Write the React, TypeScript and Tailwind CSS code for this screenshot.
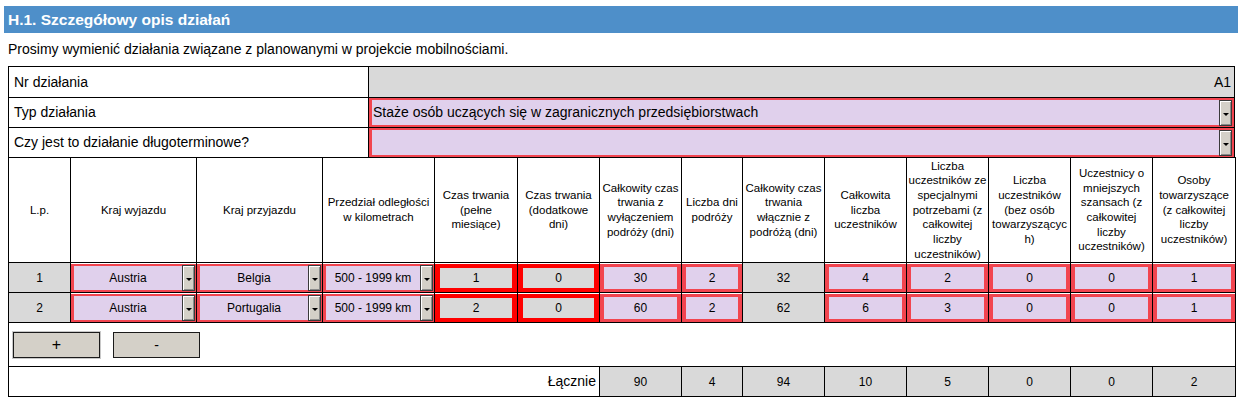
import React from 'react'

type HeadCol = { w: number; lines: string[] }

const cols: HeadCol[] = [
  { w: 62, lines: ['L.p.'] },
  { w: 126, lines: ['Kraj wyjazdu'] },
  { w: 126, lines: ['Kraj przyjazdu'] },
  { w: 112, lines: ['Przedział odległości', 'w kilometrach'] },
  { w: 83, lines: ['Czas trwania', '(pełne', 'miesiące)'] },
  { w: 82, lines: ['Czas trwania', '(dodatkowe', 'dni)'] },
  { w: 82, lines: ['Całkowity czas', 'trwania z', 'wyłączeniem', 'podróży (dni)'] },
  { w: 61, lines: ['Liczba dni', 'podróży'] },
  { w: 82, lines: ['Całkowity czas', 'trwania', 'włącznie z', 'podróżą (dni)'] },
  { w: 82, lines: ['Całkowita', 'liczba', 'uczestników'] },
  {
    w: 82,
    lines: ['Liczba', 'uczestników ze', 'specjalnymi', 'potrzebami (z', 'całkowitej', 'liczby', 'uczestników)'],
  },
  { w: 82, lines: ['Liczba', 'uczestników', '(bez osób', 'towarzyszącyc', 'h)'] },
  { w: 82, lines: ['Uczestnicy o', 'mniejszych', 'szansach (z', 'całkowitej', 'liczby', 'uczestników)'] },
  { w: 83, lines: ['Osoby', 'towarzyszące', '(z całkowitej', 'liczby', 'uczestników)'] },
]

const rows = [
  { lp: 1, from: 'Austria', to: 'Belgia', dist: '500 - 1999 km', months: 1, days: 0, noTravel: 30, travel: 2, total: 32, all: 4, special: 2, noCarers: 0, fewer: 0, carers: 1 },
  { lp: 2, from: 'Austria', to: 'Portugalia', dist: '500 - 1999 km', months: 2, days: 0, noTravel: 60, travel: 2, total: 62, all: 6, special: 3, noCarers: 0, fewer: 0, carers: 1 },
]

const totals = [90, 4, 94, 10, 5, 0, 0, 2]

const DropBtn = () => (
  <div className="flex h-[26px] w-[13px] shrink-0 items-center justify-center self-center border border-[#3a3a3a] bg-[#d4d0c8] shadow-[inset_1px_1px_0_#ffffff,inset_-1px_-1px_0_#8a8a8a]">
    <svg width="6" height="3" viewBox="0 0 6 3" className="mt-[3px]">
      <path d="M0 0h6L3 3z" fill="#000" />
    </svg>
  </div>
)

const SelectCell = ({ value }: { value: string }) => (
  <td className="border border-black p-0">
    <div className="flex h-[28px] bg-[#f2444f] py-[2px] pl-[3px] pr-[1px]">
      <div className="flex flex-1 items-center justify-center bg-[#e0d0ec] text-[12px]">{value}</div>
      <DropBtn />
    </div>
  </td>
)

const InputCell = ({ value, bright, gray }: { value: number; bright?: boolean; gray?: boolean }) => (
  <td className="border border-black p-0">
    <div className={bright ? 'h-[28px] bg-[#ff0000] px-[5px] py-[4px]' : 'h-[28px] bg-[#f2444f] px-[4px] py-[3px]'}>
      <div
        className={
          gray
            ? 'flex h-full items-center justify-center bg-[#d9d9d9] text-[12px]'
            : 'flex h-full items-center justify-center bg-[#e0d0ec] text-[12px]'
        }
      >
        {value}
      </div>
    </div>
  </td>
)

const PlainCell = ({ value }: { value: number }) => (
  <td className="border border-black bg-[#d9d9d9] p-0 text-center text-[12px]">{value}</td>
)

const App: React.FC = () => {
  return (
    <div
      className="h-[402px] w-[1242px] overflow-hidden bg-white text-black"
      style={{ fontFamily: '"Liberation Sans", Arial, sans-serif' }}
    >
      {/* nagłówek sekcji */}
      <div className="mx-[4px] mt-[6px] flex h-[27px] items-center bg-[#4e8fc9] px-[4px] text-[15.5px] font-bold text-white">
        H.1. Szczegółowy opis działań
      </div>
      <div className="flex h-[33px] items-center px-[8px] text-[14px]">
        Prosimy wymienić działania związane z planowanymi w projekcie mobilnościami.
      </div>

      {/* dane ogólne */}
      <table className="ml-[8px] w-[1227px] table-fixed border-collapse text-[14px]">
        <colgroup>
          <col className="w-[360px]" />
          <col />
        </colgroup>
        <tbody>
          <tr className="h-[31px]">
            <td className="border border-black px-[5px]">Nr działania</td>
            <td className="border border-black bg-[#d9d9d9] px-[3px] text-right">A1</td>
          </tr>
          <tr className="h-[30px]">
            <td className="border border-black px-[5px]">Typ działania</td>
            <td className="border border-black p-0">
              <div className="flex h-[29px] bg-[#f2444f] py-[2px] pl-[3px] pr-[2px]">
                <div className="flex flex-1 items-center bg-[#e0d0ec] pl-[1px]">
                  Staże osób uczących się w zagranicznych przedsiębiorstwach
                </div>
                <DropBtn />
              </div>
            </td>
          </tr>
          <tr className="h-[30px]">
            <td className="border border-black px-[5px]">Czy jest to działanie długoterminowe?</td>
            <td className="border border-black p-0">
              <div className="flex h-[29px] bg-[#f2444f] py-[2px] pl-[3px] pr-[2px]">
                <div className="flex-1 bg-[#e0d0ec]" />
                <DropBtn />
              </div>
            </td>
          </tr>
        </tbody>
      </table>

      {/* tabela mobilności */}
      <table className="-mt-px ml-[8px] w-[1227px] table-fixed border-collapse">
        <colgroup>
          {cols.map((c, i) => (
            <col key={i} style={{ width: c.w }} />
          ))}
        </colgroup>
        <tbody>
          <tr className="h-[105px]">
            {cols.map((c, i) => (
              <td key={i} className="overflow-hidden border border-black p-0 text-center align-middle text-[11.5px] leading-[14.7px]">
                {c.lines.map((l) => (
                  <div key={l} className="whitespace-nowrap">
                    {l}
                  </div>
                ))}
              </td>
            ))}
          </tr>
          {rows.map((r) => (
            <tr key={r.lp} className="h-[30px]">
              <PlainCell value={r.lp} />
              <SelectCell value={r.from} />
              <SelectCell value={r.to} />
              <SelectCell value={r.dist} />
              <InputCell value={r.months} bright gray />
              <InputCell value={r.days} bright gray />
              <InputCell value={r.noTravel} />
              <InputCell value={r.travel} />
              <PlainCell value={r.total} />
              <InputCell value={r.all} />
              <InputCell value={r.special} />
              <InputCell value={r.noCarers} />
              <InputCell value={r.fewer} />
              <InputCell value={r.carers} />
            </tr>
          ))}
          <tr className="h-[44px]">
            <td colSpan={14} className="border border-black px-[4px] pt-[1px]">
              <div className="flex gap-[13px]">
                <button className="h-[26px] w-[87px] border border-[#1a1a1a] bg-[#d4d0c8] text-[16px] leading-none outline outline-1 outline-[#c8c8c8]">
                  +
                </button>
                <button className="h-[26px] w-[87px] border border-[#1a1a1a] bg-[#d4d0c8] text-[14px] leading-none">
                  -
                </button>
              </div>
            </td>
          </tr>
          <tr className="h-[30px]">
            <td colSpan={6} className="border border-black px-[3px] text-right text-[14px]">
              Łącznie
            </td>
            {totals.map((t, i) => (
              <td key={i} className="border border-black bg-[#d9d9d9] text-center text-[12px]">
                {t}
              </td>
            ))}
          </tr>
        </tbody>
      </table>
    </div>
  )
}

export default App
